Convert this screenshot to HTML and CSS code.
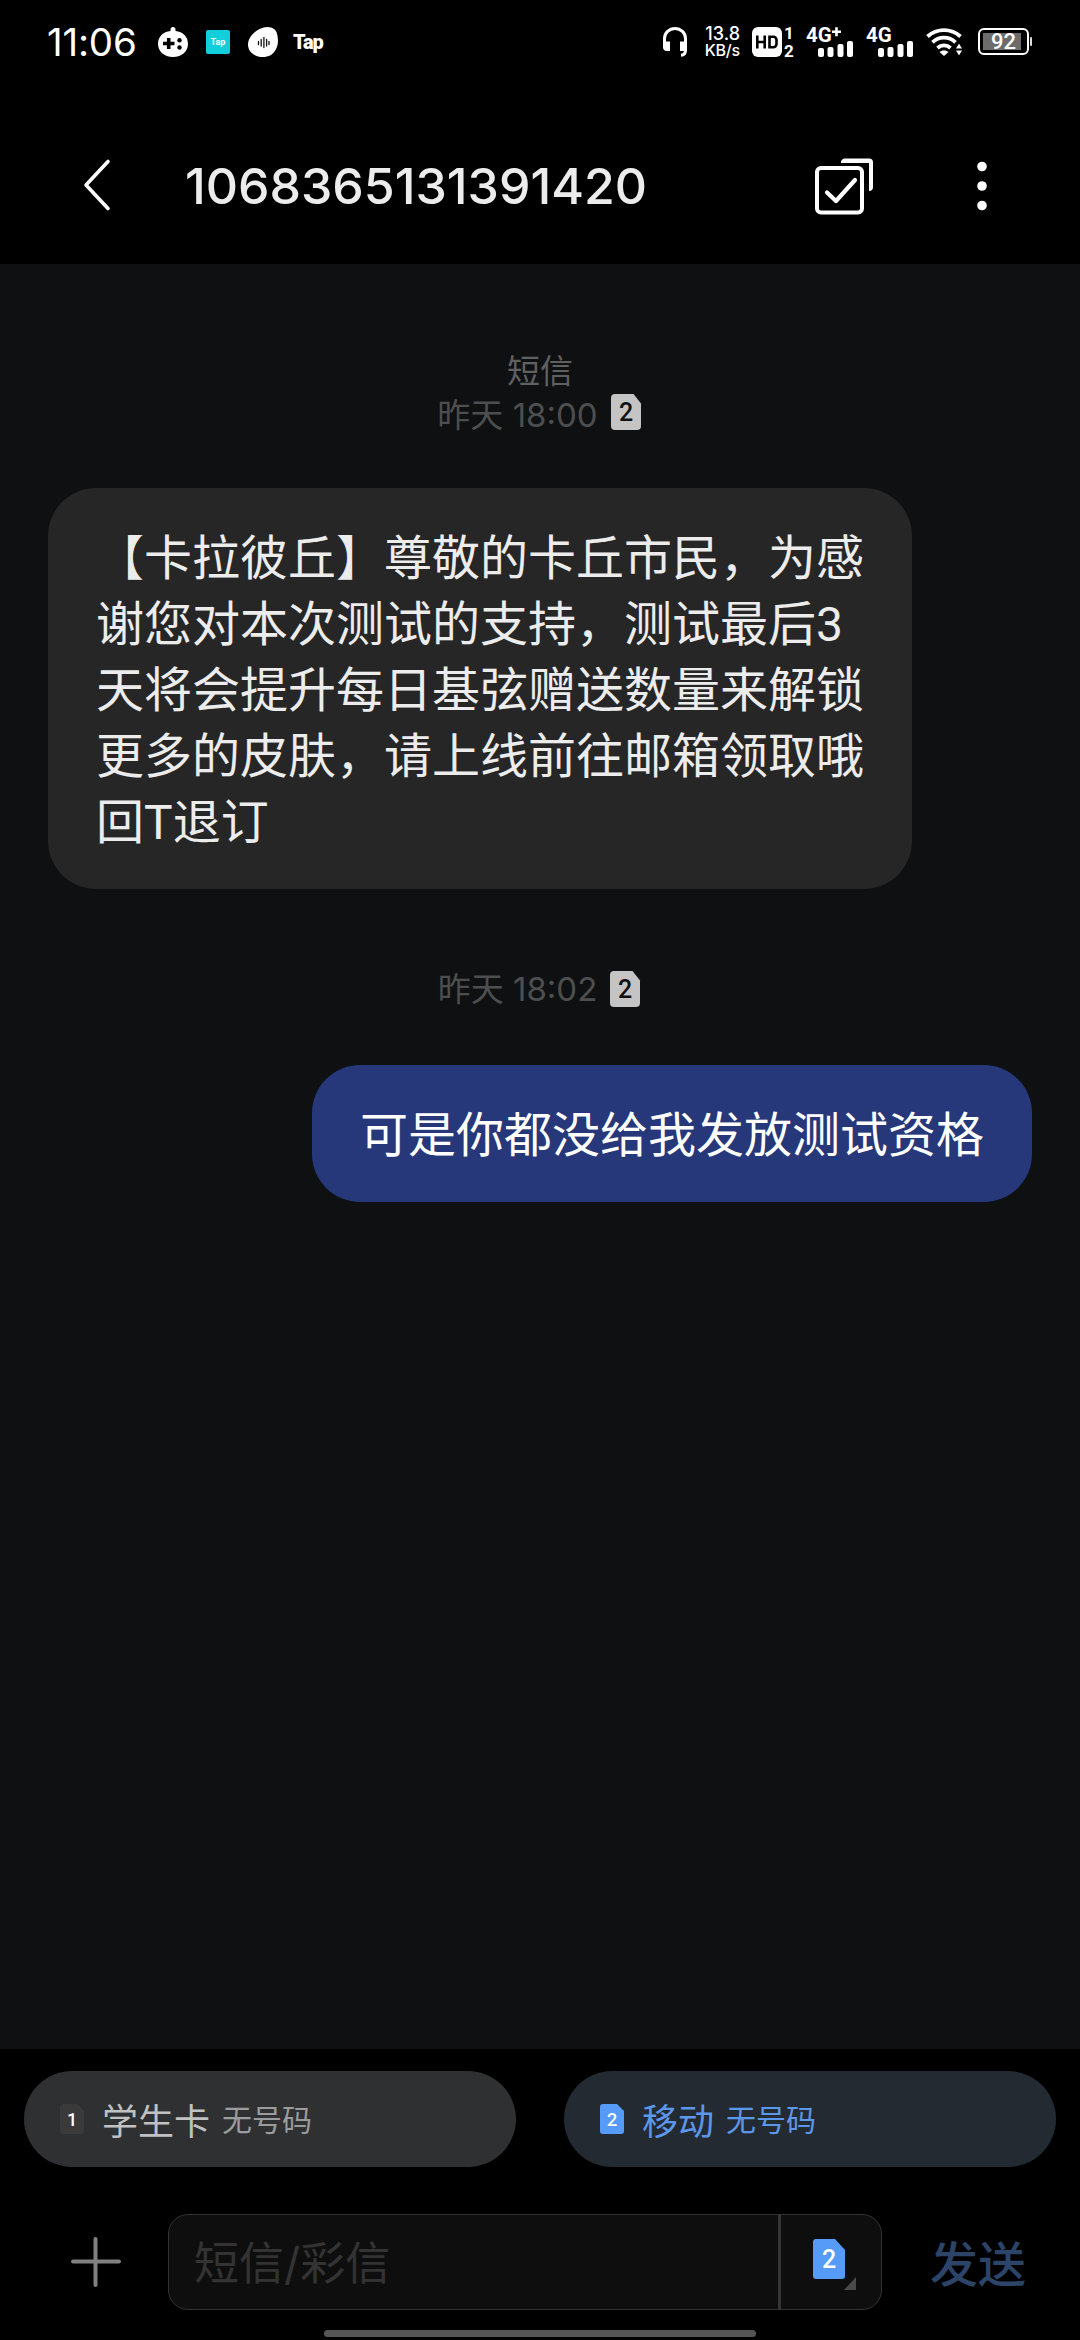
FILE: index.html
```html
<!DOCTYPE html>
<html lang="zh-CN">
<head>
<meta charset="utf-8">
<title>1068365131391420</title>
<link rel="stylesheet" href="styles.css">
</head>
<body>
<div class="phone">
  <div class="statusbar">
    <div class="status-left">
      <span class="clock">11:06</span>
      <svg class="gamepad" width="30" height="30" viewBox="0 0 30 30">
        <path fill="#fff" d="M12.500 4V2.500a2.500 2.500 0 0 1 5 0V4C25 4.600 30 10 30 17s-6 13-15 13S0 24 0 17 5 4.600 12.500 4z"/>
        <path stroke="#000" stroke-width="3.600" d="M5 16.500h11.500M10.700 11v11"/>
        <circle cx="21.500" cy="13.300" r="2.200"/><circle cx="21.500" cy="20.500" r="2.200"/>
      </svg>
      <span class="tap-tile">Tap</span>
      <svg class="leaf" width="30" height="30" viewBox="0 0 30 30">
        <path fill="#fff" d="M19 0c6 0 10 3 10.500 9 .8 5 .8 9-2 14-3 5-7 7-12.500 7C6 30 0 24.500 0 17.500 0 9 10 .5 19 0z"/>
        <path stroke="#111" stroke-width="1.300" stroke-linecap="round" d="M10.500 14.500v3M13.200 12.500v6.500M15.900 10.500v10M18.600 12.500v6.500M21 14.500v3"/>
      </svg>
      <span class="tap-text">Tap</span>
    </div>
    <div class="status-right">
      <svg class="headset" width="24" height="30" viewBox="0 0 24 30">
        <path fill="none" stroke="#fff" stroke-width="3" d="M1.500 18v-6.500a10.500 10 0 0 1 21 0V23c0 3-1.500 5-4.500 5.300"/>
        <path fill="#fff" d="M0 14.500h7V24H4a4 4 0 0 1-4-4zM17 14.500h7V22a2 2 0 0 1-2 2h-5z"/>
      </svg>
      <div class="speed"><span class="rate">13.8</span><span class="unit">KB/s</span></div>
      <svg class="hd" width="43" height="31" viewBox="0 0 43 31">
        <rect width="30" height="30" rx="6" fill="#fff"/>
        <path fill="none" stroke="#000" stroke-width="2.600" d="M5.300 8.500v13M12.700 8.500v13M5.300 15h7.400M17.500 9.800h3.800a3.200 3.200 0 0 1 3.200 3.200v4a3.200 3.200 0 0 1-3.200 3.200h-3.800z"/>
        <text x="37" y="12" class="tiny-num">1</text>
        <text x="37" y="29.500" class="tiny-num">2</text>
      </svg>
      <svg class="signal-a" width="48" height="30" viewBox="0 0 48 30">
        <text x="0" y="15" class="net">4G</text>
        <path stroke="#fff" stroke-width="2.600" d="M26 4.800h9M30.500 .3v9"/>
        <g fill="#fff"><rect x="12" y="21" width="6" height="9" rx="2"/><rect x="21.500" y="20" width="6" height="10" rx="2"/><rect x="31.500" y="17" width="6" height="13" rx="2"/><rect x="41" y="14" width="6" height="16" rx="2"/></g>
      </svg>
      <svg class="signal-b" width="48" height="30" viewBox="0 0 48 30">
        <text x="0" y="15" class="net">4G</text>
        <g fill="#fff"><rect x="12" y="21" width="6" height="9" rx="2"/><rect x="21.500" y="20" width="6" height="10" rx="2"/><rect x="31.500" y="17" width="6" height="13" rx="2"/><rect x="41" y="14" width="6" height="16" rx="2"/></g>
      </svg>
      <svg class="wifi" width="37" height="28" viewBox="0 0 37 28">
        <g fill="none" stroke="#fff" stroke-width="3.800">
          <path d="M1.500 8.500a24.500 24.500 0 0 1 33 0"/><path d="M6.500 14.300a16.500 16.500 0 0 1 23 0"/><path d="M11.500 20a9.500 9.500 0 0 1 13 0"/>
        </g>
        <path fill="#fff" d="M13.500 24q4.500-3.500 9 0L18 28z"/>
        <path fill="#fff" stroke="#000" stroke-width="1.200" d="M33 14.500l4 6.500h-8zM33 28.500l4-6.500h-8z"/>
      </svg>
      <svg class="battery" width="55" height="28" viewBox="0 0 55 28">
        <rect x="1" y="1" width="49" height="25" rx="5" fill="none" stroke="#fff" stroke-width="2"/>
        <rect x="5" y="5" width="38" height="17" fill="#6c6c6c"/>
        <rect x="52" y="9" width="2" height="9" rx="1" fill="#ddd"/>
        <text x="25.500" y="21" class="battery-num">92</text>
      </svg>
    </div>
  </div>

  <header class="header">
    <svg class="back" width="34" height="54" viewBox="0 0 34 54"><path fill="none" stroke="#fff" stroke-width="3.600" stroke-linecap="round" stroke-linejoin="round" d="M29 4.500L7 28l22 23.500"/></svg>
    <h1 class="title">1068365131391420</h1>
    <svg class="select" width="60" height="56" viewBox="0 0 60 56">
      <g fill="none" stroke="#fff" stroke-width="4" stroke-linecap="round" stroke-linejoin="round">
        <rect x="3" y="10" width="45" height="44.500" rx="4"/>
        <path d="M13 34.500l9 8.500L41 22" stroke-width="4.200"/>
      </g>
      <path fill="#fff" d="M27 5a4 4 0 0 1 4-4.500h24a4 4 0 0 1 4 4V29a4 4 0 0 1-4 4V5z"/>
    </svg>
    <svg class="more" width="12" height="50" viewBox="0 0 12 50"><g fill="#fff"><circle cx="6" cy="5.500" r="4.800"/><circle cx="6" cy="25" r="4.800"/><circle cx="6" cy="44.500" r="4.800"/></g></svg>
  </header>

  <main class="chat">
    <div class="channel">短信</div>
    <div class="stamp first"><span>昨天 18:00</span>
      <svg class="sim-badge" width="30" height="36" viewBox="0 0 30 36"><path fill="#c4c4c4" d="M4 0h18.500L30 9.500V32a4 4 0 0 1-4 4H4a4 4 0 0 1-4-4V4a4 4 0 0 1 4-4z"/><text x="15" y="26.500" class="sim-num dark">2</text></svg>
    </div>
    <p class="bubble incoming">【卡拉彼丘】尊敬的卡丘市民，为感<br>谢您对本次测试的支持，测试最后3<br>天将会提升每日基弦赠送数量来解锁<br>更多的皮肤，请上线前往邮箱领取哦<br>回T退订</p>
    <div class="stamp second"><span>昨天 18:02</span>
      <svg class="sim-badge" width="30" height="36" viewBox="0 0 30 36"><path fill="#c4c4c4" d="M4 0h18.500L30 9.500V32a4 4 0 0 1-4 4H4a4 4 0 0 1-4-4V4a4 4 0 0 1 4-4z"/><text x="15" y="26.500" class="sim-num dark">2</text></svg>
    </div>
    <p class="bubble outgoing">可是你都没给我发放测试资格</p>
  </main>

  <footer class="footer">
    <div class="chips">
      <div class="chip">
        <svg width="24" height="30" viewBox="0 0 24 30"><path fill="#3a3a3b" d="M3 0h14l7 7v20a3 3 0 0 1-3 3H3a3 3 0 0 1-3-3V3a3 3 0 0 1 3-3z"/><text x="12" y="21.500" class="sim-num small">1</text></svg>
        <span class="carrier">学生卡</span><span class="number">无号码</span>
      </div>
      <div class="chip active">
        <svg width="24" height="30" viewBox="0 0 24 30"><path fill="#579bf8" d="M3 0h14l7 7v20a3 3 0 0 1-3 3H3a3 3 0 0 1-3-3V3a3 3 0 0 1 3-3z"/><text x="12" y="21.800" class="sim-num small">2</text></svg>
        <span class="carrier">移动</span><span class="number">无号码</span>
      </div>
    </div>
    <div class="compose">
      <svg class="plus" width="50" height="50" viewBox="0 0 50 50"><path stroke="#808080" stroke-width="4" stroke-linecap="round" d="M2 24.500h46M24.500 2v46"/></svg>
      <div class="field">
        <span class="placeholder">短信/彩信</span>
        <div class="sim-picker">
          <svg width="44" height="52" viewBox="0 0 44 52"><path fill="#579bf8" d="M3 0h19l10 11v26a3 3 0 0 1-3 3H3a3 3 0 0 1-3-3V3a3 3 0 0 1 3-3z"/><text x="16" y="29" class="sim-num">2</text><path fill="#4a4a4a" d="M43 38v13H31z"/></svg>
        </div>
      </div>
      <span class="send">发送</span>
    </div>
    <div class="homebar"></div>
  </footer>
</div>
</body>
</html>
```
FILE: styles.css
```css
* { box-sizing: border-box; }

body {
  margin: 0;
  background: #000;
  font-family: Inter, "Noto Sans CJK SC", sans-serif;
  text-spacing-trim: space-all;
}

svg { display: block; flex: none; overflow: visible; }
p, h1 { margin: 0; }

.phone {
  width: 1080px;
  height: 2340px;
  display: flex;
  flex-direction: column;
  overflow: hidden;
}

/* Status bar */
.statusbar {
  height: 84px;
  display: flex;
  justify-content: space-between;
  align-items: center;
  padding: 0 47px 0 47px;
  color: #fff;
}
.status-left, .status-right { display: flex; align-items: center; height: 84px; }
.clock { width: 111px; font-size: 38.5px; letter-spacing: -0.2px; white-space: nowrap; }
.tap-tile {
  width: 24px;
  height: 24px;
  margin-left: 18px;
  border-radius: 2px;
  background: #10cfda;
  font: 700 9px/24px Roboto, sans-serif;
  text-align: center;
}
.leaf { margin-left: 18px; }
.tap-text { margin-left: 15px; font: 900 20px/24px Roboto, sans-serif; letter-spacing: -1px; }
.speed { display: flex; flex-direction: column; margin-left: 15px; width: 38px; text-align: right; white-space: nowrap; }
.rate { font-size: 18px; line-height: 16px; font-weight: 500; }
.unit { font-size: 16px; line-height: 16px; font-weight: 500; letter-spacing: -0.2px; }
.hd { margin-left: 12px; }
.signal-a { margin-left: 11px; }
.signal-b { margin-left: 12px; }
.wifi { margin-left: 12px; }
.battery { margin-left: 15px; }
.tiny-num { font: 700 17px Roboto, sans-serif; fill: #fff; text-anchor: middle; }
.net { font: 700 20.5px Roboto, sans-serif; fill: #fff; }
.battery-num { font: 500 22px Roboto, sans-serif; fill: #fff; text-anchor: middle; }

/* Conversation header */
.header {
  height: 180px;
  display: flex;
  align-items: center;
  padding: 0 92px 0 79px;
}
.back { margin-top: 20px; }
.title {
  flex: 1;
  margin-left: 72px;
  margin-top: 24px;
  font-size: 50px;
  line-height: 60px;
  font-weight: 500;
  color: #ececec;
  white-space: nowrap;
}
.select { margin-top: 23px; margin-right: 102px; }
.more { margin-top: 24px; }

/* Message list */
.chat {
  flex: 1;
  display: flex;
  flex-direction: column;
  background: #0f1011;
  padding: 85px 48px 0;
}
.channel { font-size: 33px; line-height: 44px; text-align: center; color: #5f6061; }
.stamp {
  display: flex;
  align-items: center;
  justify-content: center;
  gap: 13px;
  height: 44px;
  font-size: 33px;
  line-height: 44px;
  padding-right: 2px;
  color: #4d4e4f;
}
.stamp.first { align-items: flex-start; }
.stamp.first .sim-badge { margin-top: 1px; }
.stamp.second { margin-top: 78px; }
.stamp span { white-space: nowrap; }
.bubble {
  padding: 38px 48px 33px;
  border-radius: 48px;
  font-family: Roboto, "Noto Sans CJK SC", sans-serif;
  font-size: 48px;
  line-height: 66px;
  white-space: nowrap;
}
.incoming { width: 864px; margin-top: 51px; background: #262626; color: #ececec; }
.outgoing { align-self: flex-end; margin-top: 54px; background: #263879; color: #fff; }

/* SIM card numerals */
.sim-num { font: 500 25px Roboto, sans-serif; fill: #fff; text-anchor: middle; }
.sim-num.dark { fill: #0f1011; }
.sim-num.small { font-size: 18px; }

/* Composer */
.footer { height: 291px; display: flex; flex-direction: column; padding-top: 22px; }
.chips { display: grid; grid-template-columns: 1fr 1fr; gap: 48px; padding: 0 24px; }
.chip {
  height: 96px;
  display: flex;
  align-items: center;
  padding-left: 36px;
  border-radius: 48px;
  background: #2f3031;
  white-space: nowrap;
}
.carrier { margin-left: 18px; font-size: 36px; color: #c0c1c2; }
.number { margin-left: 12px; padding-bottom: 2px; font-size: 30px; color: #9a9b9c; }
.chip.active { background: #242a32; }
.active .carrier, .active .number { color: #5b97ea; }
.compose { display: flex; align-items: center; margin-top: 47px; padding-left: 71px; }
.field {
  width: 714px;
  height: 96px;
  margin-left: 47px;
  display: flex;
  align-items: center;
  border: 1px solid #333;
  border-radius: 20px;
  background: #0e0e0e;
}
.placeholder { flex: 1; padding: 0 0 3px 25px; font-size: 45px; color: #333; white-space: nowrap; }
.sim-picker {
  align-self: stretch;
  width: 103px;
  padding: 24px 0 0 32px;
  border-left: 3px solid #353535;
}
.send { margin-left: 48px; padding-bottom: 3px; font-size: 48px; font-weight: 500; color: #2b4468; white-space: nowrap; }
.homebar { width: 432px; height: 7px; margin: 20px auto 0; border-radius: 4px; background: #555; }
```
